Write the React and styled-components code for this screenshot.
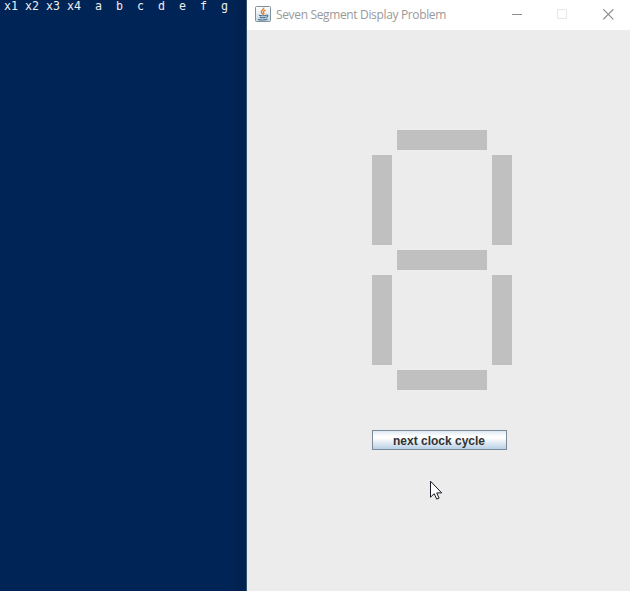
import React from "react";
import styled, { createGlobalStyle } from "styled-components";

const GlobalStyle = createGlobalStyle`
  html, body { margin: 0; padding: 0; overflow: hidden; }
  *, *::before, *::after { box-sizing: border-box; }
`;

const Desktop = styled.main`
  display: grid;
  grid-template-columns: 247px 383px;
  width: 630px;
  height: 591px;
  position: relative;
  background: #ececec;
`;

const Console = styled.pre`
  margin: 0;
  padding: 0 0 0 4px;
  background: linear-gradient(90deg, #012456 230px, #01204d 246px, #31516f 246px);
  color: #eeedf0;
  font: 11.63px/13px "DejaVu Sans Mono", monospace;
  white-space: pre;
`;

const Window = styled.section`
  display: flex;
  flex-direction: column;
  background: #ececec;
`;

const TitleBar = styled.header`
  display: flex;
  align-items: center;
  height: 30px;
  padding-left: 8px;
  background: #ffffff;
`;

const AppIcon = styled.svg`
  width: 16px;
  height: 16px;
  flex: none;
  margin-top: -2px;
`;

const Title = styled.h1`
  flex: none;
  margin: 0 0 0 5px;
  width: 218px;
  color: #999999;
  font: 400 12px/30px "Open Sans", "Noto Sans", sans-serif;
  letter-spacing: -0.35px;
  white-space: nowrap;
`;

const WindowControl = styled.button`
  display: flex;
  align-items: center;
  justify-content: center;
  flex: none;
  width: ${({ $width }) => $width}px;
  height: 30px;
  padding: 0 0 2px;
  border: 0;
  background: transparent;
  color: ${({ $disabled }) => ($disabled ? "#e7e7e7" : "#8c8c8c")};

  &:last-child {
    padding-left: 3px;
  }
`;

const ControlGlyph = styled.svg`
  flex: none;
  width: 11px;
  height: 11px;
  fill: none;
  stroke: currentColor;
  stroke-width: ${({ $weight }) => $weight || 1};
`;

const Content = styled.div`
  display: flex;
  flex-direction: column;
  align-items: flex-start;
  gap: 40px;
  padding: 100px 0 0 125px;
`;

const Display = styled.div`
  display: grid;
  grid-template-columns: 20px 90px 20px;
  grid-template-rows: 20px 90px 20px 90px 20px;
  grid-template-areas:
    ". a ."
    "f . b"
    ". g ."
    "e . c"
    ". d .";
  gap: 5px;
`;

const Segment = styled.div`
  grid-area: ${({ $name }) => $name};
  background: #c0c0c0;
`;

const ClockButton = styled.button`
  width: 135px;
  height: 20px;
  padding: 2px 1px 0 0;
  border: 1px solid #7a8a99;
  background: linear-gradient(#dde8f3 0%, #ffffff 30%, #ffffff 40%, #b8cfe5 100%);
  color: #333333;
  font: bold 12px/16px "Liberation Sans", Arial, sans-serif;
  white-space: nowrap;
`;

const Cursor = styled.svg`
  position: absolute;
  left: 430px;
  top: 480px;
  width: 13px;
  height: 20px;
`;

const segments = ["a", "b", "c", "d", "e", "f", "g"];

function JavaIcon() {
  return (
    <AppIcon viewBox="0 0 16 16" aria-hidden="true">
      <defs>
        <linearGradient id="tile" x2="0" y2="1">
          <stop stopColor="#ffffff" />
          <stop offset="1" stopColor="#cbd8e2" />
        </linearGradient>
      </defs>
      <rect x=".5" y=".5" width="15" height="15" rx="1" fill="url(#tile)" stroke="#7c929f" />
      <path d="M8.8 1.5c.5 2-3.4 2.8-2.4 5 .3.8 1.2 1.3 1.2 2M10.5 4.2C8.6 5 7.9 5.8 8.7 7c.5.7.1 1.2-.5 1.8" fill="none" stroke="#ed7a20" strokeWidth="1.3" />
      <path d="M4 9.2c1 .8 5.8.8 7 0M4.7 11.2c1.2.7 4.6.7 5.8 0M11 9.2c2.7-.8 2.4 1.8-.2 2.1M3 13.2c2 1.1 7.7 1 9.5-.2" fill="none" stroke="#476f91" strokeWidth="1.1" />
    </AppIcon>
  );
}

export default function App() {
  return (
    <>
      <GlobalStyle />
      <Desktop>
        <Console>{"x1 x2 x3 x4  a  b  c  d  e  f  g"}</Console>
        <Window>
          <TitleBar>
            <JavaIcon />
            <Title>Seven Segment Display Problem</Title>
            <WindowControl $width={47} aria-label="Minimize">
              <ControlGlyph viewBox="0 0 11 11"><path d="M0 5.5h10" /></ControlGlyph>
            </WindowControl>
            <WindowControl $width={43} $disabled aria-label="Maximize">
              <ControlGlyph viewBox="0 0 11 11"><path d="M.5.5h9v9h-9z" /></ControlGlyph>
            </WindowControl>
            <WindowControl $width={46} aria-label="Close">
              <ControlGlyph $weight={1.2} viewBox="0 0 11 11"><path d="m.3.3 10 10m0-10-10 10" /></ControlGlyph>
            </WindowControl>
          </TitleBar>
          <Content>
            <Display>
              {segments.map((name) => <Segment key={name} $name={name} />)}
            </Display>
            <ClockButton>next clock cycle</ClockButton>
          </Content>
        </Window>
        <Cursor viewBox="0 0 13 20" aria-hidden="true">
          <path d="M.5 1.2v16l3.7-3.5 2.5 5.4 2.4-1-2.4-5.2h5z" fill="#fff" stroke="#191923" />
        </Cursor>
      </Desktop>
    </>
  );
}
